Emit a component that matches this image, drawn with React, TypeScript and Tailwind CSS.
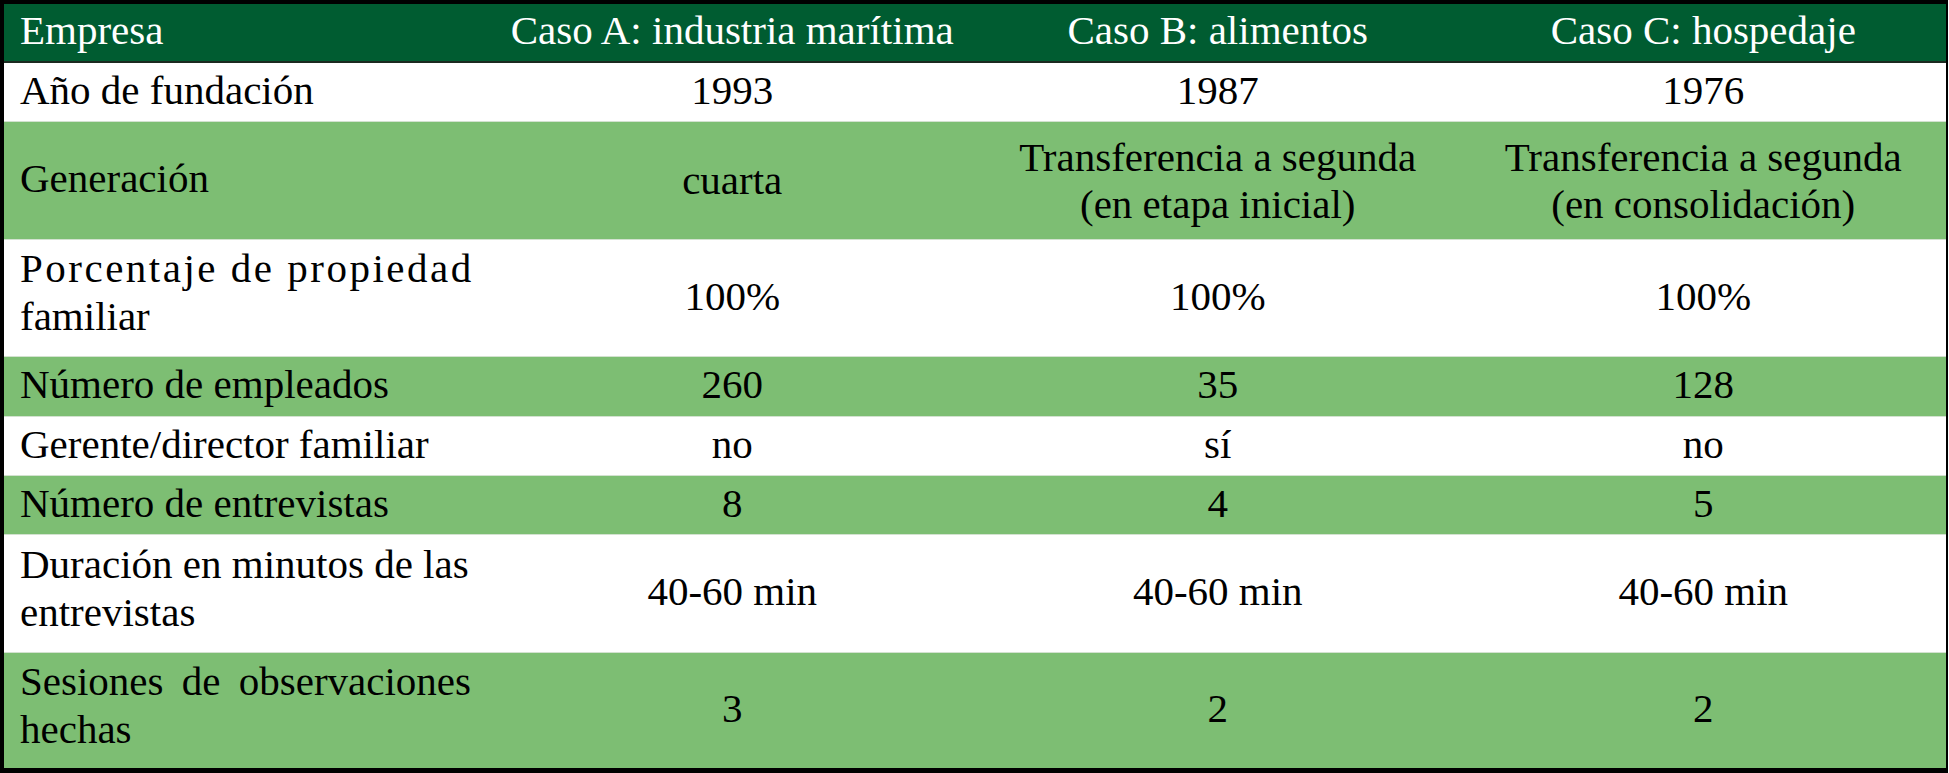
import React from "react";

type Row = {
  label: React.ReactNode;
  values: React.ReactNode[];
  h: string;
  green: boolean;
  twoLineLabel?: boolean;
  twoLineValues?: boolean;
  last?: boolean;
};

const rows: Row[] = [
  { label: "Año de fundación", values: ["1993", "1987", "1976"], h: "h-[59px]", green: false },
  {
    label: "Generación",
    values: [
      "cuarta",
      <>Transferencia a segunda<br />(en etapa inicial)</>,
      <>Transferencia a segunda<br />(en consolidación)</>,
    ],
    h: "h-[118px]",
    green: true,
    twoLineValues: true,
  },
  {
    label: (
      <>
        <span className="block whitespace-nowrap tracking-[2.5px]">Porcentaje de propiedad</span>
        <span className="block">familiar</span>
      </>
    ),
    values: ["100%", "100%", "100%"],
    h: "h-[117px]",
    green: false,
    twoLineLabel: true,
  },
  { label: "Número de empleados", values: ["260", "35", "128"], h: "h-[60px]", green: true },
  { label: "Gerente/director familiar", values: ["no", "sí", "no"], h: "h-[59px]", green: false },
  { label: "Número de entrevistas", values: ["8", "4", "5"], h: "h-[59px]", green: true },
  {
    label: (
      <>
        <span className="block whitespace-nowrap">Duración en minutos de las</span>
        <span className="block">entrevistas</span>
      </>
    ),
    values: ["40-60 min", "40-60 min", "40-60 min"],
    h: "h-[118px]",
    green: false,
    twoLineLabel: true,
  },
  {
    label: (
      <>
        <span className="flex w-[451px] justify-between whitespace-nowrap">
          <span>Sesiones</span>
          <span>de</span>
          <span>observaciones</span>
        </span>
        <span className="block">hechas</span>
      </>
    ),
    values: ["3", "2", "2"],
    h: "h-[115px]",
    green: true,
    twoLineLabel: true,
    last: true,
  },
];

export default function App() {
  return (
    <div className="w-[1949px] h-[773px] bg-white font-['Liberation_Serif','DejaVu_Serif',serif]">
      <div className="w-[1948px] border-t-4 border-l-4 border-r-2 border-b-[5px] border-black text-[41px] text-black">
        {/* header */}
        <div className="grid grid-cols-4 h-[59px] bg-[#005c31] border-b-2 border-[#1b2a20] text-white leading-none">
          <div className="flex items-center pl-4 pb-1">Empresa</div>
          <div className="flex items-center justify-center pb-1">Caso A: industria marítima</div>
          <div className="flex items-center justify-center pb-1">Caso B: alimentos</div>
          <div className="flex items-center justify-center pb-1">Caso C: hospedaje</div>
        </div>

        {rows.map((r, i) => (
          <div
            key={i}
            className={`grid grid-cols-4 ${r.h} ${r.green ? "bg-[#7dbe73]" : "bg-white"} ${
              r.last ? "" : "border-b border-[#d3e2d0]"
            }`}
          >
            <div className={`flex items-center pl-4 ${r.twoLineLabel ? "pb-3" : "pb-1"}`}>
              <div className={r.twoLineLabel ? "leading-[48px]" : "leading-none"}>{r.label}</div>
            </div>
            {r.values.map((v, j) => (
              <div
                key={j}
                className={`flex items-center justify-center text-center ${r.twoLineValues ? "pb-0" : "pb-1"}`}
              >
                <span className="block leading-[47px]">{v}</span>
              </div>
            ))}
          </div>
        ))}
      </div>
    </div>
  );
}
